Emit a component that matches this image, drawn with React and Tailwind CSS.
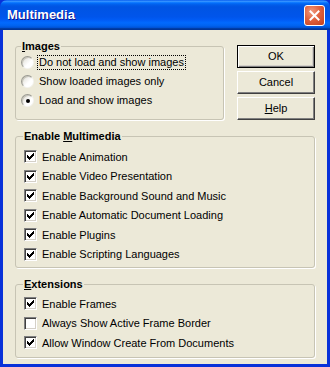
import React from 'react';

const font = { fontFamily: '"Liberation Sans", Arial, sans-serif' };

// classic 7x7 check: each column is 3px tall
const checkCols = [2, 3, 4, 3, 2, 1, 0];

function Radio({ checked }) {
  return (
    <span className="relative flex h-[13px] w-[13px] shrink-0 items-center justify-center rounded-full border border-t-[#9a9a92] border-l-[#9a9a92] border-r-[#f4f4f0] border-b-[#f4f4f0] bg-[linear-gradient(135deg,#dcdad0_0%,#ffffff_60%)] shadow-[inset_1px_1px_0_#c8c6bc]">
      {checked && <span className="h-[4px] w-[4px] rounded-full bg-black" />}
    </span>
  );
}

function Check({ checked }) {
  return (
    <span className="flex h-[13px] w-[13px] shrink-0 items-center justify-center border border-t-[#808080] border-l-[#808080] border-r-white border-b-white bg-white shadow-[inset_1px_1px_0_#404040,inset_-1px_-1px_0_#d4d0c8]">
      {checked && (
        <svg width="7" height="7" viewBox="0 0 7 7" shapeRendering="crispEdges">
          {checkCols.map((y, x) => (
            <rect key={x} x={x} y={y} width="1" height="3" fill="#000" />
          ))}
        </svg>
      )}
    </span>
  );
}

function U({ children }) {
  return <span className="underline underline-offset-[1px]">{children}</span>;
}

function Group({ title, legendMl, className, children }) {
  return (
    <fieldset className={`rounded-[3px] border border-[#c7c4b4] shadow-[1px_1px_0_#fff] ${className}`}>
      <legend className={`px-[1px] text-[11px] font-bold leading-[13px] ${legendMl}`}>{title}</legend>
      {children}
    </fieldset>
  );
}

function Row({ children, h = 'h-[19px]' }) {
  return <div className={`flex items-center ${h}`}>{children}</div>;
}

function Button({ children, def }) {
  return (
    <button
      className={`flex h-[23px] w-[78px] items-center justify-center bg-[#ece9d8] text-[11px] text-black ${
        def
          ? 'border border-black shadow-[inset_1px_1px_0_#fff,inset_-1px_-1px_0_#808080,inset_-2px_-2px_0_#d4d0c8]'
          : 'border border-t-white border-l-white border-r-[#404040] border-b-[#404040] shadow-[inset_-1px_-1px_0_#808080]'
      }`}
    >
      {children}
    </button>
  );
}

const multimedia = [
  'Enable Animation',
  'Enable Video Presentation',
  'Enable Background Sound and Music',
  'Enable Automatic Document Loading',
  'Enable Plugins',
  'Enable Scripting Languages',
];

const extensions = [
  ['Enable Frames', true],
  ['Always Show Active Frame Border', false],
  ['Allow Window Create From Documents', true],
];

export default function App() {
  return (
    <div className="flex h-[367px] w-[330px] flex-col overflow-hidden bg-[#0831d9]" style={font}>
      {/* Title bar */}
      <div className="flex h-[30px] shrink-0 items-center justify-between rounded-t-[7px] bg-[linear-gradient(to_bottom,#0058ee_0%,#3a93ff_4%,#288eff_6%,#127dff_8%,#036ffc_10%,#0262ee_14%,#0057e5_20%,#0054e3_24%,#0055eb_56%,#005bf5_66%,#026afe_76%,#0062ef_86%,#0052d6_92%,#0040ab_94%,#003092_100%)] pl-[7px] pr-[5px]">
        <span className="text-[13px] font-bold text-white [text-shadow:1px_1px_0_#0f1089]">Multimedia</span>
        <div className="flex h-[21px] w-[21px] items-center justify-center rounded-[3px] border border-white bg-[radial-gradient(circle_at_35%_30%,#f19a7e_0%,#e0623f_45%,#c3401e_100%)]">
          <svg width="11" height="11" viewBox="0 0 11 11">
            <path d="M1.5 1.5L9.5 9.5M9.5 1.5L1.5 9.5" stroke="#fff" strokeWidth="2" strokeLinecap="square" />
          </svg>
        </div>
      </div>

      {/* Body */}
      <div className="mx-[3px] mb-[3px] flex flex-1 flex-col bg-[#ece9d8] px-[12px] pt-[10px] text-[11px] text-black">
        <div className="flex gap-[13px]">
          <Group title={<><U>I</U>mages</>} legendMl="ml-[5px]" className="w-[215px] pb-[7px]">
            <div className="pl-[5px]">
              <Row>
                <Radio />
                <span className="ml-[3px] border border-dotted border-black px-[1px] leading-[13px]">Do not load and show images</span>
              </Row>
              <Row>
                <Radio />
                <span className="ml-[5px]">Show loaded images only</span>
              </Row>
              <Row>
                <Radio checked />
                <span className="ml-[5px]">Load and show images</span>
              </Row>
            </div>
          </Group>
          <div className="mt-[5px] flex flex-col gap-[3px]">
            <Button def>OK</Button>
            <Button>Cancel</Button>
            <Button>
              <U>H</U>elp
            </Button>
          </div>
        </div>

        <Group title={<>Enable <U>M</U>ultimedia</>} legendMl="ml-[7px]" className="mt-[10px] w-[300px] pb-[3px]">
          <div className="pl-[8px] pt-[4px]">
            {multimedia.map((t) => (
              <Row key={t} h="h-[19.5px]">
                <Check checked />
                <span className="ml-[5px]">{t}</span>
              </Row>
            ))}
          </div>
        </Group>

        <Group title={<><U>E</U>xtensions</>} legendMl="ml-[7px]" className="mt-[10px] w-[300px] pb-[4px]">
          <div className="pl-[8px] pt-[3px]">
            {extensions.map(([t, c]) => (
              <Row key={t} h="h-[19.5px]">
                <Check checked={c} />
                <span className="ml-[5px]">{t}</span>
              </Row>
            ))}
          </div>
        </Group>
      </div>
    </div>
  );
}
